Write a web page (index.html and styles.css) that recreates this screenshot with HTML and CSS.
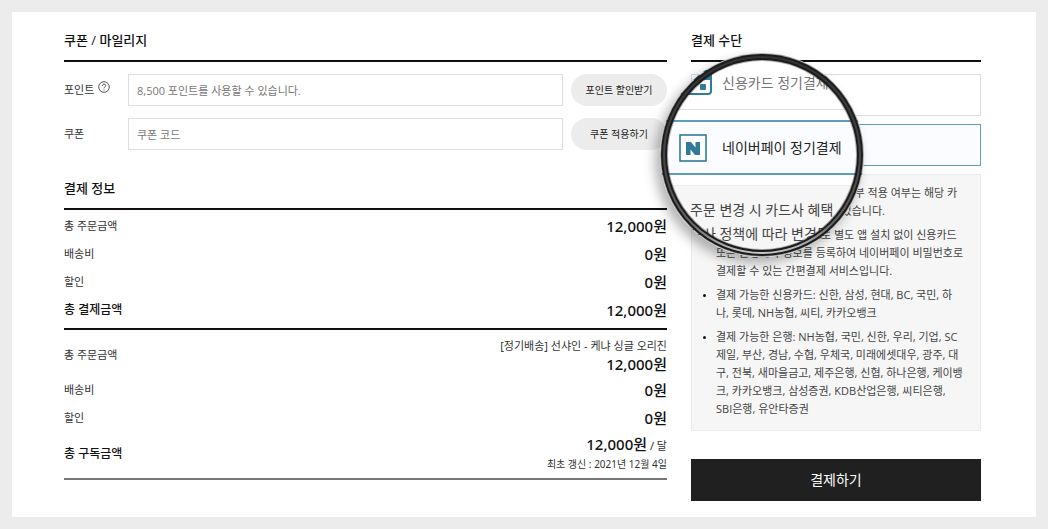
FILE: index.html
```html
<!DOCTYPE html>
<html lang="ko">
<head>
  <meta charset="UTF-8" />
  <meta name="viewport" content="width=device-width, initial-scale=1.0"/>
  <title>결제</title>
  <link rel="stylesheet" href="styles.css">
</head>
<body>
  <main class="checkout">
    <div class="order">
      <section class="coupons">
        <h2>쿠폰 / 마일리지</h2>
        <div class="field">
          <label for="point">포인트
            <svg class="help" viewBox="0 0 12 12" aria-hidden="true">
              <circle cx="6" cy="6" r="5.3"/>
              <path d="M4.3 4.8C4.3 2.5 7.7 2.6 7.7 4.7C7.7 6 6 5.9 6 7.3M6 8.3V9.3"/>
            </svg>
          </label>
          <input type="text" id="point" placeholder="8,500 포인트를 사용할 수 있습니다.">
          <button type="button" class="pill">포인트 할인받기</button>
        </div>
        <div class="field">
          <label for="coupon">쿠폰</label>
          <input type="text" id="coupon" placeholder="쿠폰 코드">
          <button type="button" class="pill">쿠폰 적용하기</button>
        </div>
      </section>

      <section class="summary">
        <h2>결제 정보</h2>
        <table class="once">
          <tr><th>총 주문금액</th><td>12,000원</td></tr>
          <tr><th>배송비</th><td>0원</td></tr>
          <tr><th>할인</th><td>0원</td></tr>
          <tr class="total"><th>총 결제금액</th><td>12,000원</td></tr>
        </table>
        <table class="monthly">
          <tr class="tall"><th>총 주문금액</th><td><span class="product">[정기배송] 선샤인 - 케냐 싱글 오리진</span>12,000원</td></tr>
          <tr><th>배송비</th><td>0원</td></tr>
          <tr><th>할인</th><td>0원</td></tr>
          <tr class="total tall"><th>총 구독금액</th><td>12,000원<span class="unit"> / 달</span><span class="renewal">최초 갱신 : 2021년 12월 4일</span></td></tr>
        </table>
      </section>
    </div>

    <aside class="payment">
      <h2>결제 수단</h2>
      <div class="options">
        <label class="option"><input type="radio" name="method" aria-label="신용카드 정기결제"></label>
        <label class="option selected"><input type="radio" name="method" aria-label="네이버페이 정기결제" checked></label>
      </div>
      <ul class="notice">
        <li>주문 변경 시 카드사 혜택 및 할부 적용 여부는 해당 카드사 정책에 따라 변경될 수 있습니다.</li>
        <li>네이버페이는 네이버ID로 별도 앱 설치 없이 신용카드 또는 은행계좌 정보를 등록하여 네이버페이 비밀번호로 결제할 수 있는 간편결제 서비스입니다.</li>
        <li>결제 가능한 신용카드: 신한, 삼성, 현대, BC, 국민, 하나, 롯데, NH농협, 씨티, 카카오뱅크</li>
        <li>결제 가능한 은행: NH농협, 국민, 신한, 우리, 기업, SC제일, 부산, 경남, 수협, 우체국, 미래에셋대우, 광주, 대구, 전북, 새마을금고, 제주은행, 신협, 하나은행, 케이뱅크, 카카오뱅크, 삼성증권, KDB산업은행, 씨티은행, SBI은행, 유안타증권</li>
      </ul>
      <button type="submit" class="pay">결제하기</button>

      <!-- Magnifier over the payment options -->
      <div class="lens" aria-hidden="true">
        <div class="lens-view">
          <div class="lens-option">
            <svg class="lens-icon card" viewBox="0 0 33 26">
              <rect x="1" y="1" width="31" height="23" rx="3" fill="#fff" stroke="#2f7b99" stroke-width="2"/>
              <path d="M2 5h29v5H2z" fill="#2f7b99"/>
              <rect x="21" y="14" width="6" height="6" rx="1" fill="#2f7b99"/>
            </svg>
            <span>신용카드 정기결제</span>
          </div>
          <div class="lens-option selected">
            <svg class="lens-icon" viewBox="0 0 28 28">
              <rect x="1" y="1" width="26" height="26" fill="#fff" stroke="#2f7b99" stroke-width="1.6"/>
              <path d="M7 8h5l4.500 5.500V8H21v13h-5l-4.500-5.500V21H7z" fill="#2f7b99"/>
            </svg>
            <span>네이버페이 정기결제</span>
          </div>
          <p class="lens-notice">주문 변경 시 카드사 혜택<br>드사 정책에 따라 변경될</p>
        </div>
        <svg class="lens-ring" viewBox="0 0 204 204">
          <defs>
            <linearGradient id="shine" x1="0" y1="0" x2="0" y2="1">
              <stop offset="0" stop-color="#333"/>
              <stop offset="0.6" stop-color="#4a4a4a"/>
              <stop offset="0.85" stop-color="#666"/>
              <stop offset="1" stop-color="#c8c8c8"/>
            </linearGradient>
          </defs>
          <circle cx="102" cy="102" r="98" stroke="#333" stroke-opacity="0.4" stroke-width="8"/>
          <circle cx="102" cy="102" r="98" stroke="#1c1c1c" stroke-width="6"/>
          <circle cx="102" cy="102" r="98" stroke="url(#shine)" stroke-width="2"/>
        </svg>
      </div>
    </aside>
  </main>
</body>
</html>
```

FILE: styles.css
```css
* {
  box-sizing: border-box;
}

body {
  margin: 0;
  padding: 12px;
  min-height: 100vh;
  display: flex;
  background: #ececec;
  color: #333;
  font-family: "Open Sans", "Noto Sans CJK KR", sans-serif;
  font-size: 11px;
  line-height: 18px;
}

button, input {
  font: inherit;
  margin: 0;
}

h2 {
  margin: 0;
  padding-bottom: 10px;
  border-bottom: 2px solid #111;
  color: #111;
  font-size: 13px;
  font-weight: 500;
  line-height: 20px;
}

.checkout {
  flex: 1;
  display: grid;
  grid-template-columns: minmax(0, 1fr) 290px;
  gap: 24px;
  padding: 18px 55px 16px 52px;
  background: #fff;
}

/* Coupons and points */
.field {
  display: flex;
  align-items: center;
  gap: 8px;
  margin-top: 12px;
}

.field label {
  display: flex;
  gap: 4px;
  width: 56px;
}

.help {
  width: 12px;
  height: 12px;
  fill: none;
  stroke: #555;
}

.field input {
  flex: 1;
  min-width: 0;
  height: 32px;
  padding: 0 8px;
  border: 1px solid #ddd;
  color: #333;
}

.field input::placeholder {
  color: #777;
}

.pill {
  width: 96px;
  height: 32px;
  padding: 0;
  border: none;
  border-radius: 16px;
  background: #ececec;
  color: #222;
  font-size: 10px;
  cursor: pointer;
}

/* Amounts */
.summary {
  margin-top: 28px;
}

table {
  width: 100%;
  border-spacing: 0;
}

.once {
  padding: 2px 0 4px;
  border-bottom: 2px solid #111;
}

.monthly {
  padding: 3px 0;
  border-bottom: 2px solid #777;
}

th, td {
  height: 28px;
  padding: 0;
}

th {
  text-align: left;
  font-weight: 400;
}

td {
  text-align: right;
  color: #111;
  font-family: "Noto Sans", "Noto Sans CJK KR", sans-serif;
  font-size: 15px;
  font-weight: 500;
}

.total th {
  color: #111;
  font-size: 12px;
  font-weight: 500;
}

.product, .renewal, .unit {
  color: #333;
  font-size: 11px;
  font-weight: 400;
}

.product, .renewal {
  display: block;
}

.renewal {
  font-size: 10px;
}

.tall > * {
  height: 43px;
}

/* Payment method */
.payment {
  position: relative;
}

.options {
  display: grid;
  gap: 8px;
  margin: 12px 0 8px;
}

.option {
  display: flex;
  align-items: center;
  height: 42px;
  padding: 0 14px;
  border: 1px solid #ddd;
}

.option input {
  appearance: none;
  width: 16px;
  height: 16px;
  border: 1px solid #2f7b99;
}

.option.selected, .lens-option.selected {
  border-color: #5f9db8;
  background: #fafcff;
  color: #222;
}

.notice {
  margin: 0;
  padding: 9px 16px 12px 24px;
  border: 1px solid #eaeaea;
  background: #f6f6f6;
  color: #444;
}

.notice li + li {
  margin-top: 6px;
}

.notice li::marker {
  color: #111;
  font-size: 8px;
}

.pay {
  width: 100%;
  height: 42px;
  margin-top: 28px;
  border: none;
  background: #202020;
  color: #fff;
  font-size: 14px;
  cursor: pointer;
}

/* Magnifier */
.lens {
  position: absolute;
  top: 23px;
  left: -31px;
  width: 204px;
  height: 204px;
  border-radius: 50%;
  box-shadow: -5px 6px 12px rgba(0, 0, 0, 0.3);
}

.lens-view {
  height: 100%;
  padding-top: 2px;
  overflow: hidden;
  border-radius: 50%;
  background: #fff;
  font-size: 14px;
  line-height: 24px;
}

.lens-option {
  display: grid;
  grid-template-columns: 43px 1fr;
  align-items: center;
  height: 55px;
  margin-bottom: 10px;
  padding-left: 19px;
  border: 2px solid #ddd;
  border-width: 1px 0;
  color: #777;
  white-space: nowrap;
}

.lens-option.selected {
  border-width: 2px 0;
}

.lens-icon {
  width: 28px;
  height: 28px;
}

.lens-icon.card {
  width: 33px;
  height: 26px;
}

.lens-notice {
  margin: 0;
  padding: 12px 0 30px 30px;
  border-top: 1px solid #eaeaea;
  background: #f6f6f6;
  color: #444;
  white-space: nowrap;
}

.lens-ring {
  position: absolute;
  inset: 0;
  fill: none;
}
```
